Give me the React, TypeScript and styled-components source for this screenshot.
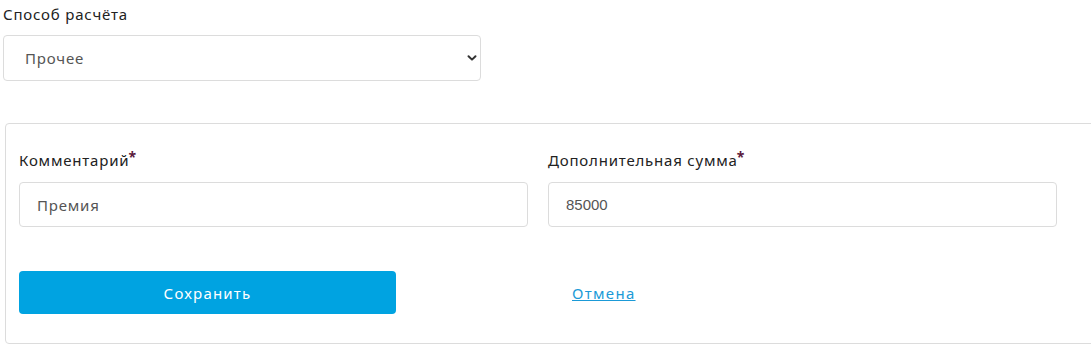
import styled, { createGlobalStyle } from "styled-components";

const GlobalStyle = createGlobalStyle`
  html, body {
    margin: 0;
    padding: 0;
    background: #fff;
    overflow: hidden;
  }
  body {
    font-family: "Noto Sans", "Liberation Sans", sans-serif;
    letter-spacing: 0.8px;
    color: #222;
  }
`;

const Page = styled.div`
  padding: 4px 0 0 3px;
  width: 1200px;
`;

const Label = styled.div`
  font-size: 15px;
  line-height: 20px;
  color: #222;
  margin-bottom: 11px;
  & > span {
    color: #5b1a3c;
    font-weight: 700;
    vertical-align: top;
    font-size: 14px;
    line-height: 14px;
    margin-left: -1px;
  }
`;

const FieldLabel = styled(Label)`
  margin-bottom: 12px;
`;

const SelectBox = styled.div`
  width: 478px;
  height: 46px;
  box-sizing: border-box;
  border: 1px solid #dcdcdc;
  border-radius: 4px;
  display: flex;
  align-items: center;
  justify-content: space-between;
  padding: 0 2px 0 21px;
  font-size: 15px;
  color: #555;
`;

const Card = styled.div`
  margin: 42px 0 0 2px;
  border: 1px solid #dcdcdc;
  border-radius: 4px;
  padding: 26px 14px 29px 13px;
  box-sizing: border-box;
`;

const Fields = styled.div`
  display: flex;
  gap: 20px;
`;

const Field = styled.div`
  width: 509px;
`;

const Input = styled.div<{ $mono?: boolean }>`
  height: 45px;
  box-sizing: border-box;
  border: 1px solid #dcdcdc;
  border-radius: 4px;
  display: flex;
  align-items: center;
  padding-left: 17px;
  font-size: 15px;
  color: #555;
  font-family: ${(p) =>
    p.$mono ? `"Liberation Sans", Arial, sans-serif` : `inherit`};
  letter-spacing: ${(p) => (p.$mono ? "0" : "inherit")};
`;

const Actions = styled.div`
  display: flex;
  align-items: center;
  margin-top: 44px;
`;

const SaveButton = styled.button`
  width: 377px;
  height: 43px;
  border: none;
  border-radius: 4px;
  background: #00a3e1;
  color: #fff;
  font-family: inherit;
  letter-spacing: 1.2px;
  font-size: 15px;
  cursor: pointer;
`;

const CancelLink = styled.a`
  margin-left: 176px;
  color: #1b9ad7;
  font-size: 15px;
  letter-spacing: 1.3px;
  text-decoration: underline;
  cursor: pointer;
`;

function Chevron() {
  return (
    <svg width="12" height="12" viewBox="0 0 12 12">
      <path
        d="M2.5 4.2 L6 7.6 L9.5 4.2"
        fill="none"
        stroke="#333"
        strokeWidth="2"
        strokeLinecap="round"
        strokeLinejoin="round"
      />
    </svg>
  );
}

export default function App() {
  return (
    <>
      <GlobalStyle />
      <Page>
        <Label>Способ расчёта</Label>
        <SelectBox>
          Прочее
          <Chevron />
        </SelectBox>
        <Card>
          <Fields>
            <Field>
              <FieldLabel>
                Комментарий<span>*</span>
              </FieldLabel>
              <Input>Премия</Input>
            </Field>
            <Field>
              <FieldLabel>
                Дополнительная сумма<span>*</span>
              </FieldLabel>
              <Input $mono>85000</Input>
            </Field>
          </Fields>
          <Actions>
            <SaveButton>Сохранить</SaveButton>
            <CancelLink>Отмена</CancelLink>
          </Actions>
        </Card>
      </Page>
    </>
  );
}
